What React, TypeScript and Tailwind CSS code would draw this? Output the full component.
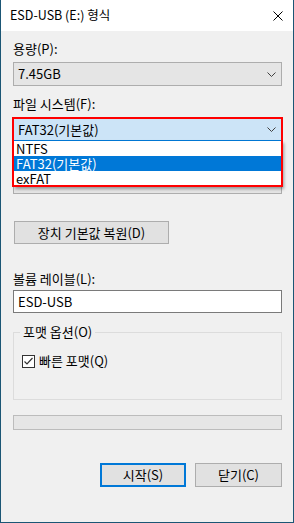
import React from "react";

const font = "font-['Noto_Sans_CJK_KR','Noto_Sans',sans-serif]";

function Chevron() {
  return (
    <svg width="9" height="5" viewBox="0 0 9 5" className="shrink-0">
      <polyline points="0.5,0.5 4.5,4.5 8.5,0.5" fill="none" stroke="#404040" strokeWidth="1" />
    </svg>
  );
}

function Label({ children, className = "" }: { children: React.ReactNode; className?: string }) {
  return <div className={`h-4 leading-4 text-[13px] text-black ${className}`}>{children}</div>;
}

function Combo({ value, className = "" }: { value: string; className?: string }) {
  return (
    <div
      className={`flex items-center justify-between h-[24px] border border-[#adadad] bg-[#e5e5e5] pl-[4px] pr-[5px] text-[13px] text-black ${className}`}
    >
      <span>{value}</span>
      <Chevron />
    </div>
  );
}

export default function App() {
  const options = ["NTFS", "FAT32(기본값)", "exFAT"];
  const selected = "FAT32(기본값)";

  return (
    <div className={`w-[294px] h-[523px] bg-[#f0f0f0] border-x border-b border-[#1b5675] flex flex-col ${font}`}>
      {/* 제목 표시줄 */}
      <div className="h-[31px] bg-white flex items-center justify-between pl-[9px] pr-[10px] shrink-0">
        <span className="text-[12.5px] text-black">ESD-USB (E:) 형식</span>
        <svg width="10" height="10" viewBox="0 0 10 10">
          <path d="M0.5 0.5 L9.5 9.5 M9.5 0.5 L0.5 9.5" stroke="#000" strokeWidth="1" />
        </svg>
      </div>

      <div className="flex flex-col pl-[12px] pr-[11px]">
        <Label className="mt-[10px]">용량(P):</Label>
        <Combo value="7.45GB" className="mt-[5px]" />

        <Label className="mt-[10px]">파일 시스템(F):</Label>
        <div className="relative mt-[6px]">
          <div className="flex items-center justify-between h-[23px] border border-[#0078d7] bg-[#cce4f7] pl-[4px] pr-[5px] text-[13px] text-black">
            <span>{selected}</span>
            <Chevron />
          </div>

          {/* 목록 뒤에 가려진 할당 단위 */}
          <Label className="mt-[8px] invisible">할당 단위 크기(A):</Label>
          <div className="mt-[5px] h-[24px] border border-[#adadad] bg-[#e5e5e5]" />

          {/* 펼쳐진 목록 */}
          <div className="absolute left-0 right-0 top-[23px] bg-white border border-[#7a7a7a] border-t-0 shadow-[2px_2px_3px_rgba(0,0,0,0.35)] z-10">
            {options.map((o) => (
              <div
                key={o}
                className={`h-[15px] leading-[15px] pl-[2px] text-[13px] ${
                  o === selected ? "bg-[#0078d7] text-white" : "text-black"
                }`}
              >
                {o}
              </div>
            ))}
          </div>

          {/* 강조 표시 */}
          <div className="absolute left-[-1px] right-[-1px] top-[-1px] h-[70px] border-2 border-[#ff0000] z-20 pointer-events-none" />
        </div>

        <button className="mt-[27px] ml-px w-[155px] h-[23px] border border-[#adadad] bg-[#e1e1e1] text-[13px] text-black">
          장치 기본값 복원(D)
        </button>

        <Label className="mt-[27px]">볼륨 레이블(L):</Label>
        <div className="mt-[3px] h-[23px] border border-[#7a7a7a] bg-white pl-[4px] flex items-center text-[13px] text-black">
          ESD-USB
        </div>

        <div className="relative mt-[19px] h-[68px] border border-[#dcdcdc] pt-[20px] pl-[8px]">
          <span className="absolute top-[-9px] left-[6px] px-[3px] bg-[#f0f0f0] leading-4 text-[13px] text-black">
            포맷 옵션(O)
          </span>
          <div className="flex items-center gap-[4px]">
            <div className="w-[13px] h-[13px] border border-[#333333] bg-white flex items-center justify-center">
              <svg width="11" height="11" viewBox="0 0 11 11">
                <polyline points="1.5,5.5 4,8 9.5,2" fill="none" stroke="#333" strokeWidth="1.2" />
              </svg>
            </div>
            <span className="text-[13px] leading-4 text-black">빠른 포맷(Q)</span>
          </div>
        </div>

        <div className="mt-[15px] h-[15px] border border-[#bcbcbc] bg-[#e6e6e6]" />

        <div className="mt-[33px] flex justify-end gap-[9px]">
          <button className="w-[86px] h-[24px] border-2 border-[#0078d7] bg-[#e1e1e1] text-[13px] text-black">
            시작(S)
          </button>
          <button className="w-[87px] h-[24px] border border-[#adadad] bg-[#e1e1e1] text-[13px] text-black">
            닫기(C)
          </button>
        </div>
      </div>
    </div>
  );
}
